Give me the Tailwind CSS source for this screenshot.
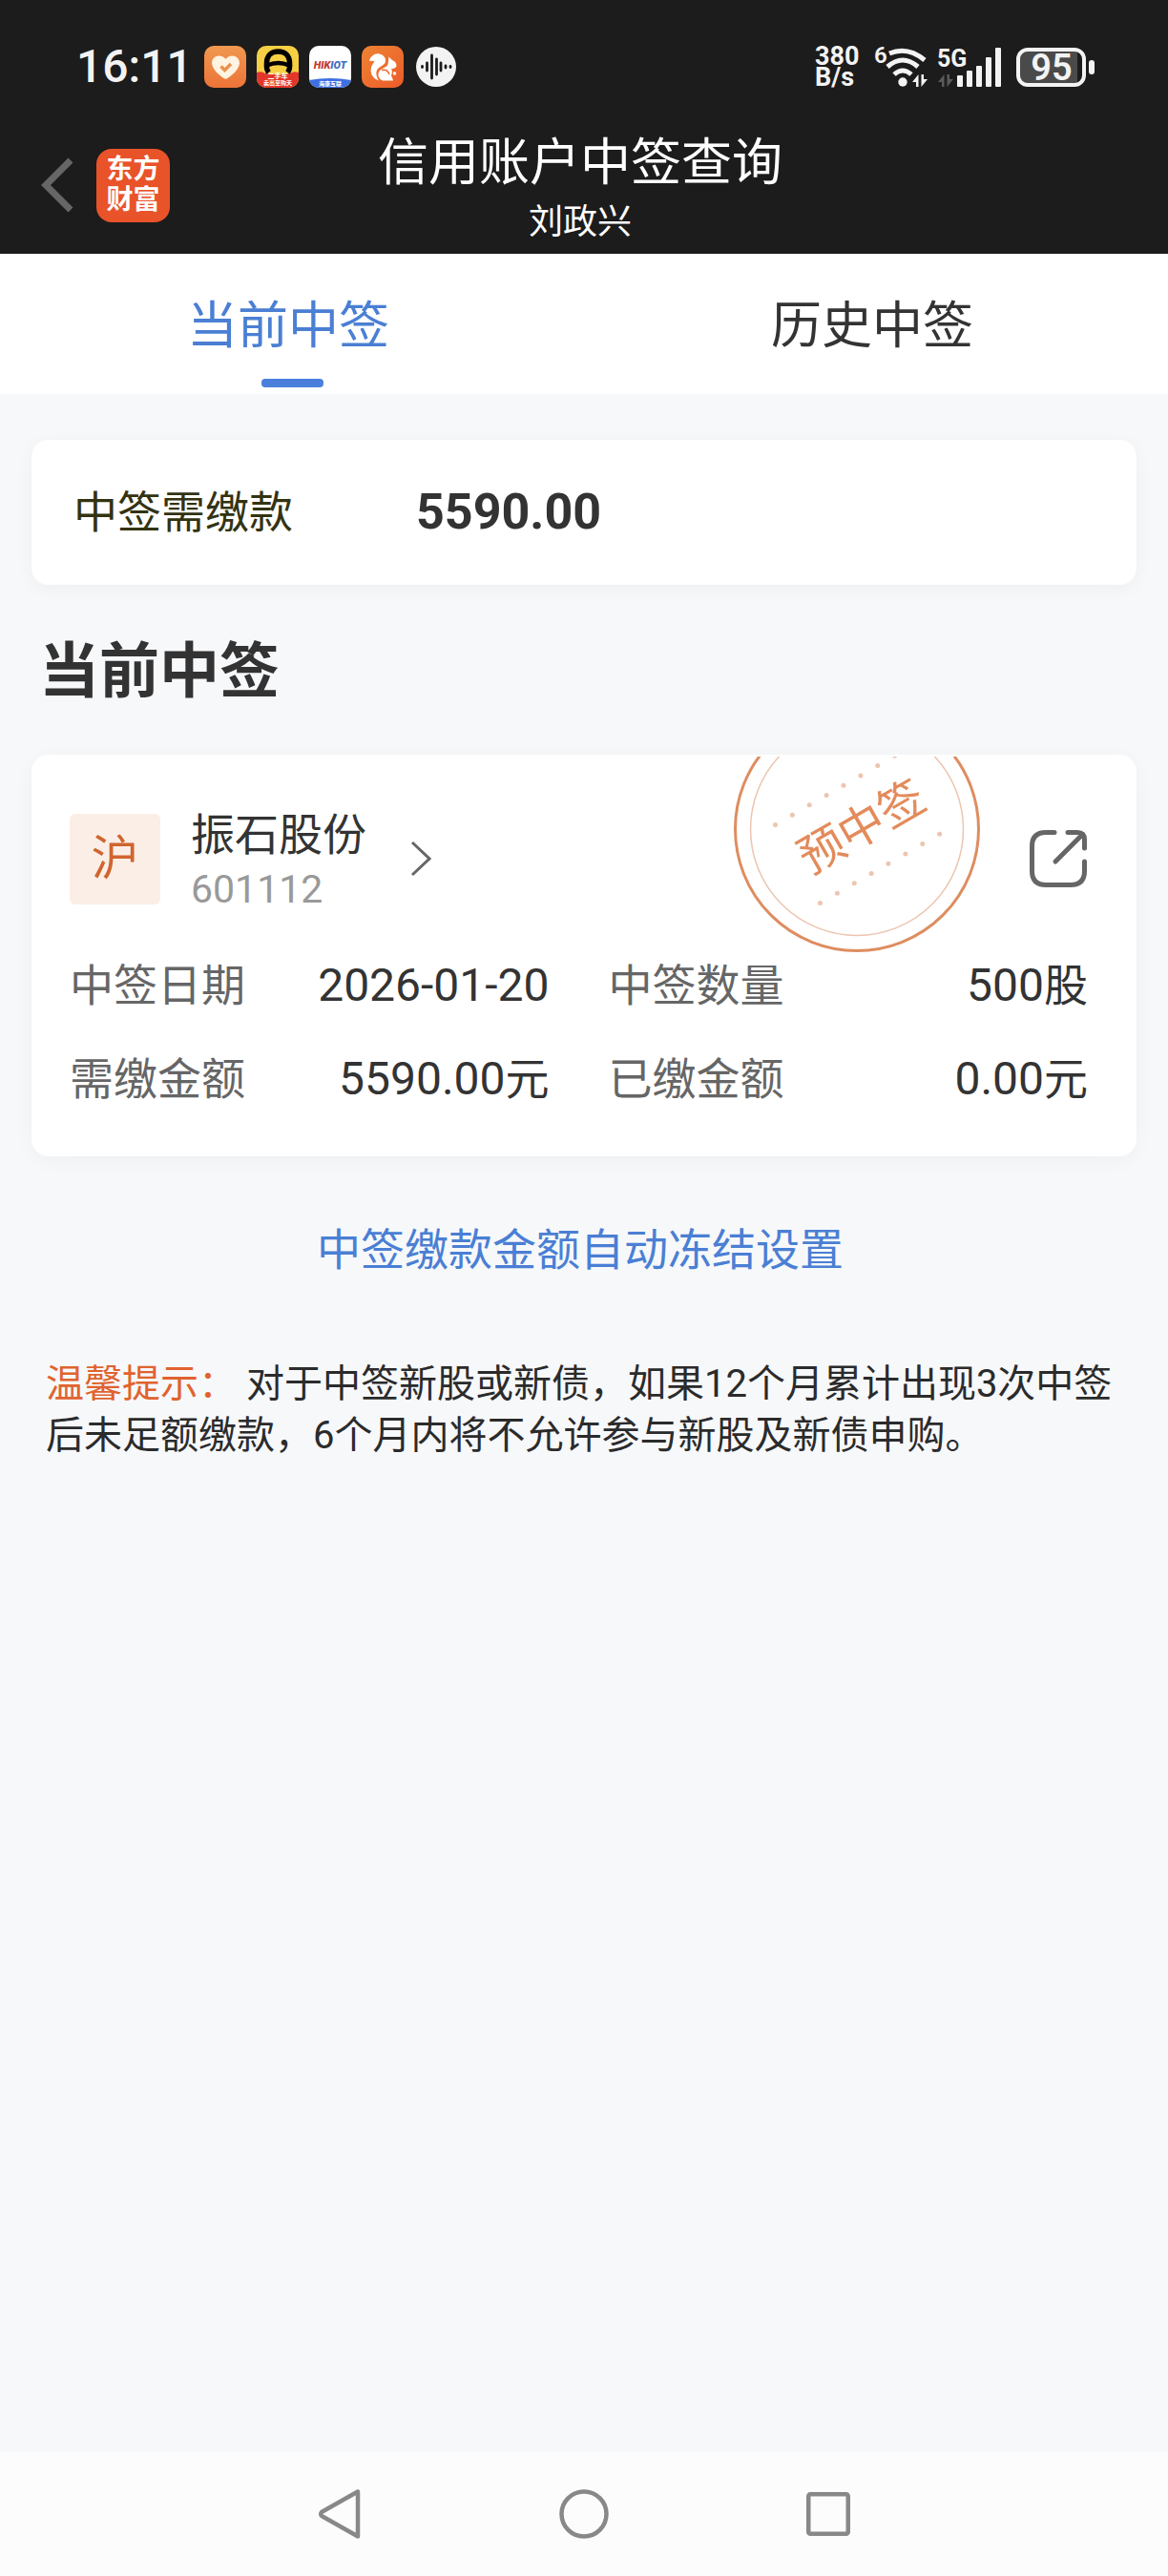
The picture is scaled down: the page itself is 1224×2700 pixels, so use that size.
<!DOCTYPE html>
<html lang="zh-CN">
  <head>
    <meta charset="UTF-8" />
    <title>信用账户中签查询</title>
    <meta name="viewport" content="width=device-width, initial-scale=1.0" />
    <script src="https://cdn.jsdelivr.net/npm/@tailwindcss/browser@4"></script>
  </head>
  <body class="min-h-screen flex flex-col bg-[#f7f8fa] text-[#333] font-[Roboto,'Noto_Sans_CJK_SC',sans-serif]">
    <header class="bg-[#1c1c1c] text-white">
      <!-- status bar -->
      <div class="flex items-center justify-between h-[140px] pl-20 pr-[77px] text-[#f3f3f3]">
        <div class="flex items-center gap-[11px]">
          <span class="w-[123px] text-5xl font-medium">16:11</span>
          <svg class="size-11" viewBox="0 0 44 44">
            <defs>
              <linearGradient id="heartBg" x1="0" y1="0" x2="0" y2="1">
                <stop offset="0" stop-color="#f0984f" />
                <stop offset="1" stop-color="#ec7438" />
              </linearGradient>
            </defs>
            <rect width="44" height="44" rx="10" fill="url(#heartBg)" />
            <path d="M22.500 35C18 33 8 25 8 18C8 13.500 11.500 10.500 15.500 10.500C18.500 10.500 21 12 22.500 14C24 12 26.500 10.500 29.500 10.500C33.500 10.500 37 13.500 37 18C37 25 27 33 22.500 35Z" fill="#fff3e2" />
            <path d="M17.500 21.500L21.500 25.500L28 19" fill="none" stroke="#e9924c" stroke-width="3.500" />
          </svg>
          <svg class="size-11" viewBox="0 0 44 44">
            <defs>
              <clipPath id="carClip"><rect width="44" height="44" rx="10" /></clipPath>
            </defs>
            <g clip-path="url(#carClip)">
              <rect width="44" height="44" fill="#f6cf45" />
              <path d="M0 28Q5 26 9 29Q22 31 35 29Q39 26 44 28V44H0Z" fill="#e3362b" />
              <path d="M12.500 28C9.500 24 10.500 21 10.500 18C10.500 10.500 15 6 22.500 6C30 6 34.500 10.500 34.500 18C34.500 21 35.500 24 32.500 28" fill="none" stroke="#000" stroke-width="5.500" />
              <path d="M11 20.500Q22.500 15.500 34 20.500" fill="none" stroke="#000" stroke-width="4.500" />
              <text x="22" y="34" font-size="7" font-weight="700" fill="#fff" text-anchor="middle">二手车</text>
              <text x="22" y="41" font-size="6" font-weight="700" fill="#fff" text-anchor="middle">卖出至购天</text>
            </g>
          </svg>
          <svg class="size-11" viewBox="0 0 44 44">
            <defs>
              <clipPath id="hikClip"><rect width="44" height="44" rx="10" /></clipPath>
            </defs>
            <g clip-path="url(#hikClip)">
              <rect width="44" height="44" fill="#fff" />
              <path d="M0 36Q22 32 44 36V44H0Z" fill="#3f6fe0" />
              <text x="22" y="24" font-size="11" font-weight="900" font-style="italic" fill="#c23a32" text-anchor="middle">HIK<tspan fill="#3d6cc4">IOT</tspan></text>
              <text x="22" y="42" font-size="6" font-weight="700" fill="#fff" text-anchor="middle">海康互联</text>
            </g>
          </svg>
          <svg class="size-11" viewBox="0 0 44 44">
            <defs>
              <linearGradient id="ucBg" x1="0" y1="0" x2="1" y2="1">
                <stop offset="0" stop-color="#ed8433" />
                <stop offset="1" stop-color="#ec5b2a" />
              </linearGradient>
            </defs>
            <rect width="44" height="44" rx="10" fill="url(#ucBg)" />
            <path d="M8 16C9 11 14 7.500 18.500 8.500C23 9.500 25.500 12.500 25 16.500C24.500 20 20 21 17 24C14.500 27 15 32 18 36.500C12 34.500 8.500 29 10 23C10.500 20.500 12 18.500 13.500 16.500C11.500 15.500 10 15.500 8 16Z" fill="#fff" />
            <path d="M28.500 11.500L32 15C35 16 36.500 18.500 36.500 21.500C35.500 23.500 33 24 31 24C32.500 26.500 32 28.500 31 31C31.500 33 32.500 34 33 36.500H22C18 35 16.500 31 18 27.500C20 23.500 26 23 27.500 19.500C28 17 28 14 28.500 11.500Z" fill="#fff" />
            <path d="M21 25.500Q27 24 29 30" fill="none" stroke="#ed6b2d" stroke-width="1.500" />
            <circle cx="34.500" cy="29" r="1.800" fill="#fff" />
          </svg>
          <svg class="ml-0.5 size-[42px]" viewBox="0 0 42 42">
            <circle cx="21" cy="21" r="21" fill="#f3f3f3" />
            <path d="M6.500 20.500V21.500M11.500 17V25M16.500 9V33M21.500 13V29M26 17V25M31 20V22M36 20.500V21.500" stroke="#1c1c1c" stroke-width="2.800" stroke-linecap="round" />
          </svg>
        </div>
        <div class="flex items-center">
          <div class="w-[61px] text-[27px] leading-[22px] font-bold">380<br />B/s</div>
          <svg class="w-[67px] h-11 overflow-visible" viewBox="0 0 67 44" fill="none" stroke="currentColor" stroke-width="5">
            <text x="1" y="18" font-size="24" font-weight="600" fill="currentColor" stroke="none">6</text>
            <path d="M17 8Q36 0 54 15M15 22Q31 8 47 22M22 30Q31 22 40 30" />
            <circle cx="31" cy="38" r="4.700" fill="currentColor" stroke="none" />
            <path d="M41 38L47.500 30V43H45V38ZM57 35L50.500 43V30H53V35Z" fill="currentColor" stroke="none" />
          </svg>
          <svg class="w-[83px] h-11 overflow-visible" viewBox="0 0 83 44" fill="currentColor">
            <text x="0" y="22" font-size="25" font-weight="700">5G</text>
            <path d="M1 38L7.500 30V43H5V38ZM17 35L10.500 43V30H13V35Z" fill="#5a5a5a" />
            <rect x="21" y="31" width="6" height="12" rx="1" />
            <rect x="31" y="26" width="6" height="17" rx="1" />
            <rect x="41" y="21" width="6" height="22" rx="1" />
            <rect x="51" y="12" width="6" height="31" rx="1" />
            <rect x="61" y="2" width="6" height="41" rx="1" />
          </svg>
          <svg class="w-[82px] h-11" viewBox="0 0 82 44">
            <path d="M13 5H64V40H13Q4 40 4 31V14Q4 5 13 5Z" fill="#4a4a4a" />
            <rect x="2" y="4" width="69" height="37" rx="10" fill="none" stroke="currentColor" stroke-width="4" />
            <rect x="76" y="15" width="6" height="15" rx="3" fill="currentColor" />
            <text x="37" y="36" font-size="38" font-weight="600" fill="currentColor" text-anchor="middle">95</text>
          </svg>
        </div>
      </div>
      <!-- title bar -->
      <div class="grid grid-cols-[1fr_auto_1fr] h-[126px]">
        <div class="flex items-center gap-6 h-[108px] pl-[43px]">
          <button type="button" aria-label="返回">
            <svg class="w-[34px] h-[58px]" viewBox="0 0 34 58" fill="none" stroke="#666" stroke-width="7">
              <path d="M31 3L5 29L31 55" />
            </svg>
          </button>
          <a href="#" class="flex flex-col items-center justify-center size-[77px] rounded-2xl bg-[#e9532a] text-[28px] leading-8 font-bold">
            <span>东方</span>
            <span>财富</span>
          </a>
        </div>
        <div class="pr-2 text-center">
          <h1 class="text-[53px] leading-[62px]">信用账户中签查询</h1>
          <p class="text-4xl leading-[62px]">刘政兴</p>
        </div>
      </div>
    </header>

    <nav class="grid grid-cols-2 h-[147px] bg-white text-[53px]">
      <button type="button" class="flex flex-col items-center justify-between pt-[38px] pb-[7px] text-[#4a7fd4]">
        <span class="pr-2 leading-[76px]">当前中签</span>
        <span class="w-[65px] h-[9px] rounded-sm bg-[#4a80dc]"></span>
      </button>
      <button type="button" class="flex flex-col items-center pt-[38px]">
        <span class="pr-2 leading-[76px]">历史中签</span>
      </button>
    </nav>

    <main class="grow px-[33px] pt-12">
      <section class="flex items-center h-[152px] px-11 rounded-[18px] bg-white shadow-[0_4px_20px_rgba(0,0,0,0.04)]">
        <span class="w-[359px] text-[46px] text-[#333311]">中签需缴款</span>
        <span class="text-[52px] font-bold">5590.00</span>
      </section>

      <h2 class="mt-[45px] pl-2 text-[63px] leading-[92px] font-bold">当前中签</h2>

      <section class="relative mt-[41px] pt-[61px] pb-8 pl-10 pr-[51px] rounded-[18px] bg-white shadow-[0_4px_20px_rgba(0,0,0,0.04)]">
        <!-- stamp, cut off by the card's top edge -->
        <svg class="absolute top-0.5 right-[163px] w-[260px] h-[206px]" viewBox="0 0 260 206" fill="none">
          <circle cx="130" cy="76" r="127.500" stroke="#de8d60" stroke-width="3" />
          <circle cx="130" cy="76" r="111.500" stroke="#ecc5b0" stroke-width="1.500" />
          <g stroke="#ecc5b0" stroke-width="5" stroke-linecap="round" stroke-dasharray="0 20.640">
            <path d="M44.500 71.500L170 -1" />
            <path d="M91.500 153.500L217 81" />
          </g>
          <text x="135" y="91" transform="rotate(-30 134 74)" font-size="48" fill="#e38b5c" text-anchor="middle">预中签</text>
        </svg>

        <div class="flex items-center h-[96px]">
          <span class="flex items-center justify-center size-[95px] rounded-md bg-[#fbeee6] text-[50px] text-[#d0652f]">沪</span>
          <a href="#" class="flex items-center ml-8">
            <span class="flex flex-col pt-1">
              <span class="text-[46px] leading-[60px]">振石股份</span>
              <span class="text-[41px] leading-[54px] text-[#999]">601112</span>
            </span>
            <svg class="ml-[46px] w-[22px] h-[38px]" viewBox="0 0 22 38" fill="none" stroke="#666" stroke-width="3">
              <path d="M2 2L20 19L2 36" />
            </svg>
          </a>
          <button type="button" aria-label="分享" class="ml-auto">
            <svg class="size-[62px]" viewBox="0 0 62 62" fill="none" stroke="#666" stroke-width="5" stroke-linecap="round">
              <path d="M27 3.500H18Q3.500 3.500 3.500 18V44Q3.500 58.500 18 58.500H44Q58.500 58.500 58.500 44V34" />
              <path d="M41 3.500H51Q58.500 3.500 58.500 11V20M56 6L28 34" />
            </svg>
          </button>
        </div>

        <dl class="grid grid-cols-2 gap-x-[62px] mt-9 text-[46px] leading-[98px]">
          <div class="flex justify-between">
            <dt class="text-[#666]">中签日期</dt>
            <dd class="text-5xl leading-[98px]">2026-01-20</dd>
          </div>
          <div class="flex justify-between">
            <dt class="text-[#666]">中签数量</dt>
            <dd><span class="text-5xl leading-[98px]">500</span>股</dd>
          </div>
          <div class="flex justify-between">
            <dt class="text-[#666]">需缴金额</dt>
            <dd><span class="text-5xl leading-[98px]">5590.00</span>元</dd>
          </div>
          <div class="flex justify-between">
            <dt class="text-[#666]">已缴金额</dt>
            <dd><span class="text-5xl leading-[98px]">0.00</span>元</dd>
          </div>
        </dl>
      </section>

      <p class="mt-16 pr-2 text-center text-[46px] leading-[68px]">
        <a href="#" class="text-[#4a7fd4]">中签缴款金额自动冻结设置</a>
      </p>

      <p class="mt-20 px-[15px] text-[40px] leading-[54px] text-[#2b2b2b]">
        <span class="text-[#e0632f]">温馨提示：</span>
        对于中签新股或新债，如果12个月累计出现3次中签后未足额缴款，6个月内将不允许参与新股及新债申购。
      </p>
    </main>

    <!-- system navigation -->
    <footer class="flex items-center justify-center gap-[207px] h-[130px] bg-[#fcfcfc] text-[#888]">
      <button type="button" aria-label="后退">
        <svg class="w-[46px] h-[52px]" viewBox="0 0 46 52" fill="none" stroke="currentColor" stroke-width="4.500" stroke-linejoin="round">
          <path d="M42 2.500V49.500L4 28Q2.500 26 4 24Z" />
        </svg>
      </button>
      <button type="button" aria-label="主页">
        <svg class="size-[52px]" viewBox="0 0 52 52" fill="none" stroke="currentColor" stroke-width="4.500">
          <circle cx="26" cy="26" r="23.500" />
        </svg>
      </button>
      <button type="button" aria-label="最近任务">
        <svg class="size-[46px]" viewBox="0 0 46 46" fill="none" stroke="currentColor" stroke-width="4.500">
          <rect x="2.250" y="2.250" width="41.500" height="41.500" rx="2" />
        </svg>
      </button>
    </footer>
  </body>
</html>
